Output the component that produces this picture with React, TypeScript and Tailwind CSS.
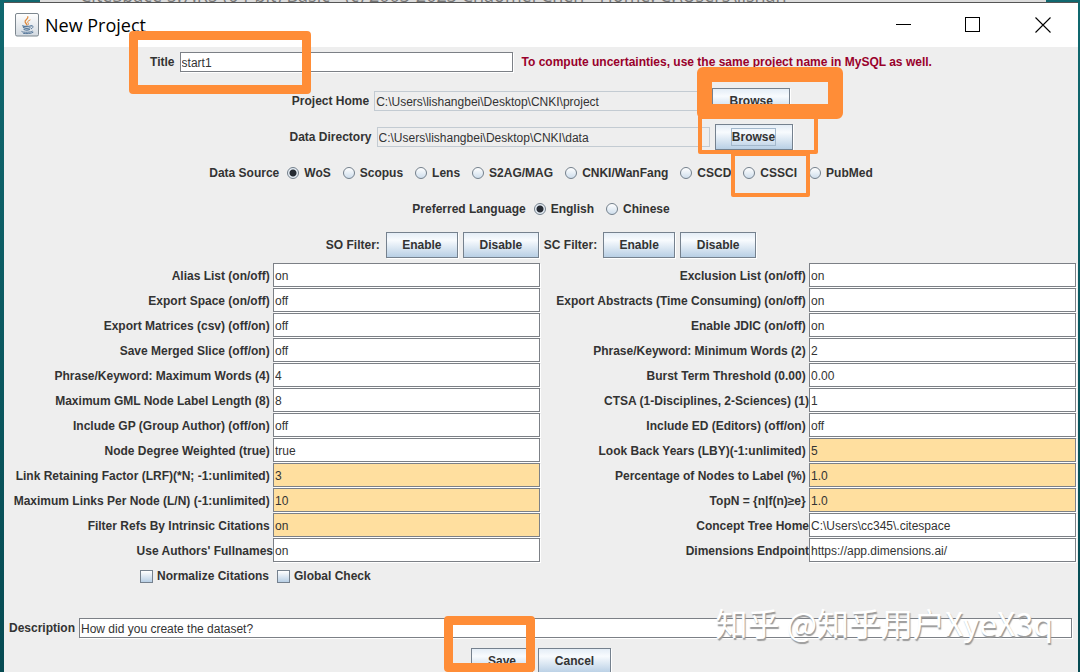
import React, { useState } from 'react';

interface Option {
  id: string;
  label: string;
  value: string;
  highlight?: boolean;
}

// A trailing space keeps the label off its field, as in the Swing form
const options: Option[] = [
  { id: 'alias', label: 'Alias List (on/off) ', value: 'on' },
  { id: 'exclusion', label: 'Exclusion List (on/off) ', value: 'on' },
  { id: 'space', label: 'Export Space (on/off) ', value: 'off' },
  { id: 'abstracts', label: 'Export Abstracts (Time Consuming) (on/off) ', value: 'on' },
  { id: 'matrices', label: 'Export Matrices (csv) (off/on) ', value: 'off' },
  { id: 'jdic', label: 'Enable JDIC (on/off) ', value: 'on' },
  { id: 'merged', label: 'Save Merged Slice (off/on) ', value: 'off' },
  { id: 'minWords', label: 'Phrase/Keyword: Minimum Words (2) ', value: '2' },
  { id: 'maxWords', label: 'Phrase/Keyword: Maximum Words (4) ', value: '4' },
  { id: 'burst', label: 'Burst Term Threshold (0.00) ', value: '0.00' },
  { id: 'gml', label: 'Maximum GML Node Label Length (8) ', value: '8' },
  { id: 'ctsa', label: 'CTSA (1-Disciplines, 2-Sciences) (1)', value: '1' },
  { id: 'gp', label: 'Include GP (Group Author) (off/on) ', value: 'off' },
  { id: 'ed', label: 'Include ED (Editors) (off/on) ', value: 'off' },
  { id: 'degree', label: 'Node Degree Weighted (true) ', value: 'true' },
  { id: 'lby', label: 'Look Back Years (LBY)(-1:unlimited) ', value: '5', highlight: true },
  { id: 'lrf', label: 'Link Retaining Factor (LRF)(*N; -1:unlimited) ', value: '3', highlight: true },
  { id: 'percent', label: 'Percentage of Nodes to Label (%) ', value: '1.0', highlight: true },
  { id: 'maxLinks', label: 'Maximum Links Per Node (L/N) (-1:unlimited) ', value: '10', highlight: true },
  { id: 'topn', label: 'TopN = {n|f(n)≥e} ', value: '1.0', highlight: true },
  { id: 'refs', label: 'Filter Refs By Intrinsic Citations ', value: 'on', highlight: true },
  { id: 'concept', label: 'Concept Tree Home', value: 'C:\\Users\\cc345\\.citespace' },
  { id: 'fullnames', label: "Use Authors' Fullnames", value: 'on' },
  { id: 'dimensions', label: 'Dimensions Endpoint', value: 'https://app.dimensions.ai/' }
];

const sources = ['WoS', 'Scopus', 'Lens', 'S2AG/MAG', 'CNKI/WanFang', 'CSCD', 'CSSCI', 'PubMed'];
const languages = ['English', 'Chinese'];

const fieldClass = 'border border-[#7c8086] bg-white px-px pt-0.5 font-normal shadow-[1px_1px_0_#fff] outline-none';
const readOnlyClass = 'h-5 w-[333px] border border-[#c3cbd2] px-px pt-0.5 font-normal outline-none';

const SwingButton: React.FC<{ className: string; focused?: boolean; children: React.ReactNode }> = ({
  className,
  focused,
  children
}) => (
  <button
    type="button"
    className={`flex h-[26px] shrink-0 items-center justify-center border border-[#75818e] bg-linear-to-b from-[#e4edf6] via-[#f8fbfe] via-30% to-[#b8cfe5] shadow-[1px_1px_0_#fff] ${className}`}
  >
    <span className={focused ? 'border border-[#a3b8cc]' : ''}>{children}</span>
  </button>
);

interface RadioGroupProps {
  name: string;
  title: string;
  items: string[];
  selected: string;
  onSelect: (item: string) => void;
}

const RadioGroup: React.FC<RadioGroupProps> = ({ name, title, items, selected, onSelect }) => (
  <div role="radiogroup" aria-label={title} className="flex h-9 items-center justify-center gap-3">
    <span className="-mr-1">{title}</span>
    {items.map(item => (
      <label key={item} className="flex items-center gap-[5px]">
        <input
          type="radio"
          name={name}
          checked={selected === item}
          onChange={() => onSelect(item)}
          className="size-3 appearance-none rounded-full border border-[#74808c] bg-linear-to-b from-white to-[#cfdeec] checked:bg-[radial-gradient(circle,#262b33_3px,#e6eef6_4px)]"
        />
        {item}
      </label>
    ))}
  </div>
);

const CheckBox: React.FC<{ label: string }> = ({ label }) => (
  <label className="flex items-center gap-1">
    <input
      type="checkbox"
      className="size-[13px] appearance-none border border-[#75818e] bg-linear-to-b from-white to-[#b8cfe5] checked:bg-[#7a8a99]"
    />
    {label}
  </label>
);

const JavaIcon: React.FC = () => (
  <svg viewBox="0 0 24 24" className="size-6" aria-hidden="true">
    <defs>
      <linearGradient id="tile" x1="0" y1="0" x2="0" y2="1">
        <stop offset="0" stopColor="#ffffff" />
        <stop offset="1" stopColor="#d3dae1" />
      </linearGradient>
    </defs>
    <rect x="0.5" y="0.5" width="23" height="22.5" rx="1.5" fill="url(#tile)" stroke="#7d878f" />
    <g fill="none" strokeLinecap="round">
      <path d="M12.8 3.8c1 2.2-3.8 3.2-2.6 5.4.4.9 1.4 1.5 1.6 2.6" stroke="#e08a3c" strokeWidth="1.3" />
      <path d="M15 7c-2.2.9-3 2-1.8 3.2.5.6.2 1.3-.3 1.8" stroke="#e08a3c" strokeWidth="1" />
      <path d="M8 12.6c-2 .9 6 1.2 8.2.1M8.4 14.6c1.8.9 5 .8 6.8.1M9 16.5c1.6.7 4 .7 5.6.1" stroke="#56789b" strokeWidth="1.1" />
      <path d="M16.2 12.8c2.2-.8 2.8 1.7.2 2.9M6.6 18.3c-1.4 1.2 9 1.5 10.8 0M8.5 20.4c3 .5 7.5.3 9.5-1" stroke="#56789b" strokeWidth="1" />
    </g>
  </svg>
);

const TitleBar: React.FC = () => (
  <header className="flex h-11 items-center bg-white pl-[11px] text-black">
    <JavaIcon />
    <h1 className="ml-[6px] flex-1 font-['Open_Sans','Noto_Sans',sans-serif] text-lg font-normal">New Project</h1>
    <button type="button" aria-label="Minimize" className="flex h-full w-[70px] items-center justify-center">
      <svg viewBox="0 0 16 16" className="size-4" shapeRendering="crispEdges">
        <path d="M0.5 7.5h15" stroke="currentColor" />
      </svg>
    </button>
    <button type="button" aria-label="Maximize" className="flex h-full w-[70px] items-center justify-center">
      <svg viewBox="0 0 16 16" className="size-4" shapeRendering="crispEdges">
        <path d="M0.5 0.5h14v14h-14z" fill="none" stroke="currentColor" />
      </svg>
    </button>
    <button type="button" aria-label="Close" className="flex h-full w-[70px] items-center justify-center">
      <svg viewBox="0 0 16 16" className="size-4">
        <path d="M0.5 0.5l15 15M15.5 0.5l-15 15" stroke="currentColor" strokeWidth="1.1" />
      </svg>
    </button>
  </header>
);

const App: React.FC = () => {
  const [source, setSource] = useState('WoS');
  const [language, setLanguage] = useState('English');

  return (
    <div className="relative h-screen overflow-hidden bg-linear-to-b from-[#10686f] to-[#064a52] pr-0.5 pl-1 font-['Liberation_Sans',Arial,sans-serif] text-xs font-bold text-[#333]">
      {/* lower edge of the main window's title bar */}
      <div className="mr-8 ml-9 flex h-0.5 items-end overflow-hidden bg-[#dcdcdc] pl-10 font-['Open_Sans','Noto_Sans',sans-serif] text-lg leading-[14px] font-normal whitespace-nowrap text-[#777]">
        <span>CiteSpace 5.7.R5 (64-bit) Basic - (c) 2003-2023 Chaomei Chen - Home: C:\Users\lishan</span>
      </div>

      <main className="min-h-full border-t border-[#555] bg-[#eee]">
        <TitleBar />

        <form className="px-px">
          <div className="mb-[6px] flex h-[30px] items-center justify-center gap-[5px]">
            <label htmlFor="title">Title</label>
            <input id="title" defaultValue="start1" className={`h-5 w-[333px] ${fieldClass}`} />
            <span className="ml-1 text-[#99002b]">
              To compute uncertainties, use the same project name in MySQL as well.
            </span>
          </div>

          <div className="flex h-9 items-center justify-center gap-[5px]">
            <label htmlFor="home">Project Home</label>
            <input id="home" readOnly value="C:\Users\lishangbei\Desktop\CNKI\project" className={readOnlyClass} />
            <SwingButton className="w-[78px]">Browse</SwingButton>
          </div>
          <div className="flex h-9 items-center justify-center gap-[5px]">
            <label htmlFor="data">Data Directory</label>
            <input id="data" readOnly value="C:\Users\lishangbei\Desktop\CNKI\data" className={readOnlyClass} />
            <SwingButton className="w-[78px]" focused>Browse</SwingButton>
          </div>

          <RadioGroup name="source" title="Data Source" items={sources} selected={source} onSelect={setSource} />
          <RadioGroup name="language" title="Preferred Language" items={languages} selected={language} onSelect={setLanguage} />

          <div className="flex h-9 items-center justify-center gap-[5px]">
            <span className="mr-px">SO Filter:</span>
            <SwingButton className="w-[72px]">Enable</SwingButton>
            <SwingButton className="w-[76px]">Disable</SwingButton>
            <span className="mr-px">SC Filter:</span>
            <SwingButton className="w-[72px]">Enable</SwingButton>
            <SwingButton className="w-[76px]">Disable</SwingButton>
          </div>

          <div className="grid auto-rows-[25px] grid-cols-4">
            {options.map(option => (
              <React.Fragment key={option.id}>
                <label htmlFor={option.id} className="flex items-center justify-end whitespace-pre">
                  {option.label}
                </label>
                <input
                  id={option.id}
                  defaultValue={option.value}
                  className={`mr-px mb-px min-w-0 ${fieldClass} ${option.highlight ? 'bg-[#ffdf9f]!' : ''}`}
                />
              </React.Fragment>
            ))}
          </div>

          <div className="grid h-[26px] grid-cols-4">
            <div className="flex items-center justify-end pr-1">
              <CheckBox label="Normalize Citations" />
            </div>
            <div className="flex items-center pl-1">
              <CheckBox label="Global Check" />
            </div>
          </div>

          <div className="mt-[29px] flex items-center gap-1 pr-[5px] pl-1">
            <label htmlFor="description">Description</label>
            <input
              id="description"
              defaultValue="How did you create the dataset?"
              className={`h-5 min-w-0 flex-1 ${fieldClass}`}
            />
          </div>

          <div className="mt-2.5 flex justify-center gap-[5px]">
            <SwingButton className="w-[62px]">Save</SwingButton>
            <SwingButton className="w-[73px]">Cancel</SwingButton>
          </div>
        </form>
      </main>

      {/* hand-drawn highlight boxes */}
      <div className="pointer-events-none absolute top-[31px] left-[129px] h-[63px] w-[182px] rounded-[4px] border-9 border-[#ff8d37]" />
      <div className="pointer-events-none absolute top-[115px] left-[698px] h-[39px] w-[120px] rounded-[2px] border-4 border-[#ff8d37]" />
      <div className="pointer-events-none absolute top-[67px] left-[697px] h-[52px] w-[146px] rounded-[6px] border-15 border-[#ff8d37]" />
      <div className="pointer-events-none absolute top-[152px] left-[731px] h-[45px] w-[79px] rounded-[2px] border-4 border-[#ff8d37]" />
      <div className="pointer-events-none absolute top-[616px] left-[444px] h-[56px] w-[91px] rounded-[4px] border-9 border-[#ff8d37]" />

      <div className="pointer-events-none absolute right-[27px] bottom-[30px] font-['Noto_Sans_CJK_SC',sans-serif] text-[32px] leading-10 font-normal text-white [text-shadow:1px_2px_1px_#999]">
        知乎 @知乎用户XyeX3q
      </div>
    </div>
  );
};

export default App;
